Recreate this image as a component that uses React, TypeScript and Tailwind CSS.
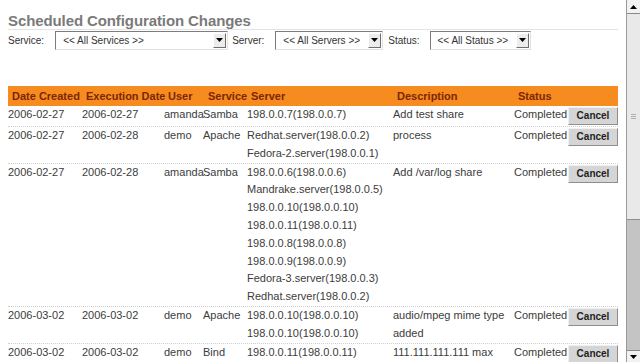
import React from "react";

type Change = {
  created: string;
  executed: string;
  user: string;
  service: string;
  servers: string[];
  description: string;
  status: string;
};

const changes: Change[] = [
  {
    created: "2006-02-27",
    executed: "2006-02-27",
    user: "amanda",
    service: "Samba",
    servers: ["198.0.0.7(198.0.0.7)"],
    description: "Add test share",
    status: "Completed",
  },
  {
    created: "2006-02-27",
    executed: "2006-02-28",
    user: "demo",
    service: "Apache",
    servers: ["Redhat.server(198.0.0.2)", "Fedora-2.server(198.0.0.1)"],
    description: "process",
    status: "Completed",
  },
  {
    created: "2006-02-27",
    executed: "2006-02-28",
    user: "amanda",
    service: "Samba",
    servers: [
      "198.0.0.6(198.0.0.6)",
      "Mandrake.server(198.0.0.5)",
      "198.0.0.10(198.0.0.10)",
      "198.0.0.11(198.0.0.11)",
      "198.0.0.8(198.0.0.8)",
      "198.0.0.9(198.0.0.9)",
      "Fedora-3.server(198.0.0.3)",
      "Redhat.server(198.0.0.2)",
    ],
    description: "Add /var/log share",
    status: "Completed",
  },
  {
    created: "2006-03-02",
    executed: "2006-03-02",
    user: "demo",
    service: "Apache",
    servers: ["198.0.0.10(198.0.0.10)", "198.0.0.10(198.0.0.10)"],
    description: "audio/mpeg mime type added",
    status: "Completed",
  },
  {
    created: "2006-03-02",
    executed: "2006-03-02",
    user: "demo",
    service: "Bind",
    servers: ["198.0.0.11(198.0.0.11)"],
    description: "111.111.111.111 max",
    status: "Completed",
  },
];

const cols = "grid grid-cols-[74px_82px_39px_44px_146px_121px_54px_50px]";

const DownArrow = () => (
  <svg width="7" height="4" viewBox="0 0 7 4">
    <path d="M0 0h7L3.5 4z" fill="#000" />
  </svg>
);

const Select = ({ label, width }: { label: string; width: string }) => (
  <div className={`flex h-[19px] ${width} items-start border-l border-t border-[#7c7c7c] border-b border-r border-b-[#e2e2e2] border-r-[#e2e2e2] bg-white`}>
    <span className="flex-1 whitespace-nowrap pl-[7px] text-[10px] leading-[18px] text-[#333]">{label}</span>
    <span className="mr-px mt-px flex h-[15px] w-[13px] justify-center border-b border-r border-[#6f6f6f] border-l border-t border-l-white border-t-white bg-[#ececec] pt-[4px]">
      <DownArrow />
    </span>
  </div>
);

const ScrollBar = () => (
  <div className="flex h-[362px] w-[14px] shrink-0 flex-col border-l border-[#9a9a9a] bg-[#c4c4c4]">
    <div className="flex h-[14px] items-center justify-center border-b border-[#8a8a8a] bg-[#f2f2f2]">
      <svg width="7" height="4" viewBox="0 0 7 4">
        <path d="M0 4h7L3.5 0z" fill="#000" />
      </svg>
    </div>
    <div className="flex h-[206px] flex-col items-center justify-center gap-px border-b border-[#8f8f8f] bg-[#e9e9e9]">
      <span className="h-px w-[5px] bg-[#b0b0b0]" />
      <span className="h-px w-[5px] bg-[#b0b0b0]" />
      <span className="h-px w-[5px] bg-[#b0b0b0]" />
    </div>
    <div className="flex-1" />
    <div className="flex h-[12px] items-center justify-center border-t border-[#8a8a8a] bg-[#f2f2f2]">
      <DownArrow />
    </div>
  </div>
);

export default function App() {
  return (
    <div className="flex h-[362px] w-[640px] overflow-hidden bg-white font-['Liberation_Sans',Arial,sans-serif]">
      <div className="w-[626px] overflow-hidden px-2">
        <h2 className="h-[30px] w-[610px] border-b border-[#e3e3e3] pt-[12px] text-[15px] font-bold leading-[17px] tracking-[-0.1px] text-[#7a7a7a]">
          Scheduled Configuration Changes
        </h2>

        <div className="mt-px flex h-[19px] items-center text-[10px] text-[#333]">
          <span>Service:</span>
          <div className="ml-[11px]">
            <Select label="<< All Services >>" width="w-[173px]" />
          </div>
          <span className="ml-[4px]">Server:</span>
          <div className="ml-[11px]">
            <Select label="<< All Servers >>" width="w-[108px]" />
          </div>
          <span className="ml-[5px]">Status:</span>
          <div className="ml-[10px]">
            <Select label="<< All Status >>" width="w-[101px]" />
          </div>
        </div>

        <div className="mt-[36px] w-[610px]">
          <div className={`${cols} h-[20px] bg-[#f68b1f] text-[11px] font-bold leading-[20px] text-[#7d2606]`}>
            <span className="whitespace-nowrap pl-[4px]">Date Created</span>
            <span className="whitespace-nowrap pl-[4px]">Execution Date</span>
            <span className="whitespace-nowrap pl-[4px]">User</span>
            <span className="whitespace-nowrap pl-[5px]">Service</span>
            <span className="whitespace-nowrap pl-[4px]">Server</span>
            <span className="whitespace-nowrap pl-[4px]">Description</span>
            <span className="whitespace-nowrap pl-[4px]">Status</span>
            <span />
          </div>

          {changes.map((c, i) => (
            <div
              key={i}
              className={`${cols} border-b border-dotted border-[#cfcfcf] text-[11px] leading-[17.8px] text-[#3c3c3c]`}
            >
              <span className="whitespace-nowrap">{c.created}</span>
              <span className="whitespace-nowrap">{c.executed}</span>
              <span className="whitespace-nowrap">{c.user}</span>
              <span className="whitespace-nowrap">{c.service}</span>
              <div className="flex flex-col">
                {c.servers.map((s, j) => (
                  <span key={j} className="whitespace-nowrap">{s}</span>
                ))}
              </div>
              <span>{c.description}</span>
              <span className="whitespace-nowrap">{c.status}</span>
              <div>
                <button className="my-px flex h-[18px] w-[50px] items-center justify-center border border-[#8e8e8e] border-l-[#f0f0f0] border-t-[#f0f0f0] bg-[#d5d5d5] text-[10px] font-bold text-[#1e1e1e]">
                  Cancel
                </button>
              </div>
            </div>
          ))}
        </div>
      </div>
      <ScrollBar />
    </div>
  );
}
